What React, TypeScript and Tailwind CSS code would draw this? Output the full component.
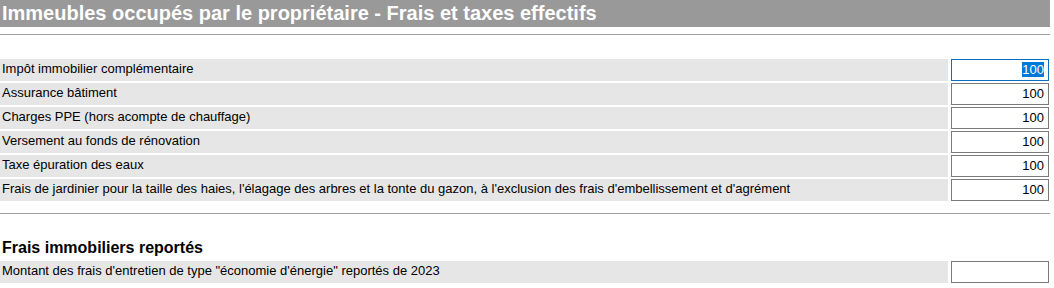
import React from 'react';

const rows = [
  'Impôt immobilier complémentaire',
  'Assurance bâtiment',
  'Charges PPE (hors acompte de chauffage)',
  'Versement au fonds de rénovation',
  'Taxe épuration des eaux',
  "Frais de jardinier pour la taille des haies, l'élagage des arbres et la tonte du gazon, à l'exclusion des frais d'embellissement et d'agrément",
];

function Row({ label, value, focused }: { label: string; value: string; focused?: boolean }) {
  return (
    <div className="flex h-[22px] mb-[2px]">
      <div className="w-[948px] bg-[#e6e6e6] pl-[2px] text-[13px] leading-[19px] text-black truncate">{label}</div>
      <div className="ml-[3px] w-[98px]">
        <div
          className={`h-[22px] w-full bg-white border text-right pr-[4px] text-[13px] leading-[20px] text-black ${
            focused ? 'border-[#0a6fc2]' : 'border-[#7a7a7a]'
          }`}
        >
          {focused ? (
            <span className="bg-[#0078d7] text-white">{value}</span>
          ) : (
            value
          )}
        </div>
      </div>
    </div>
  );
}

export default function App() {
  return (
    <div className="w-[1054px] h-[288px] bg-white overflow-hidden" style={{ fontFamily: '"Liberation Sans", Arial, sans-serif' }}>
      <div className="w-[1050px] h-[27px] bg-[#999999] text-white font-bold text-[20px] leading-[26px] pl-[2px]">
        Immeubles occupés par le propriétaire - Frais et taxes effectifs
      </div>
      <div className="w-[1050px] h-px bg-[#a0a0a0] mt-[7px]" />
      <div className="mt-[24px]">
        {rows.map((r, i) => (
          <Row key={r} label={r} value="100" focused={i === 0} />
        ))}
      </div>
      <div className="w-[1050px] h-px bg-[#a0a0a0] mt-[12px]" />
      <div className="mt-[22px] h-[25px] pl-[2px] font-bold text-[16px] leading-[24px] text-black">
        Frais immobiliers reportés
      </div>
      <Row label={'Montant des frais d\'entretien de type "économie d\'énergie" reportés de 2023'} value="" />
    </div>
  );
}
